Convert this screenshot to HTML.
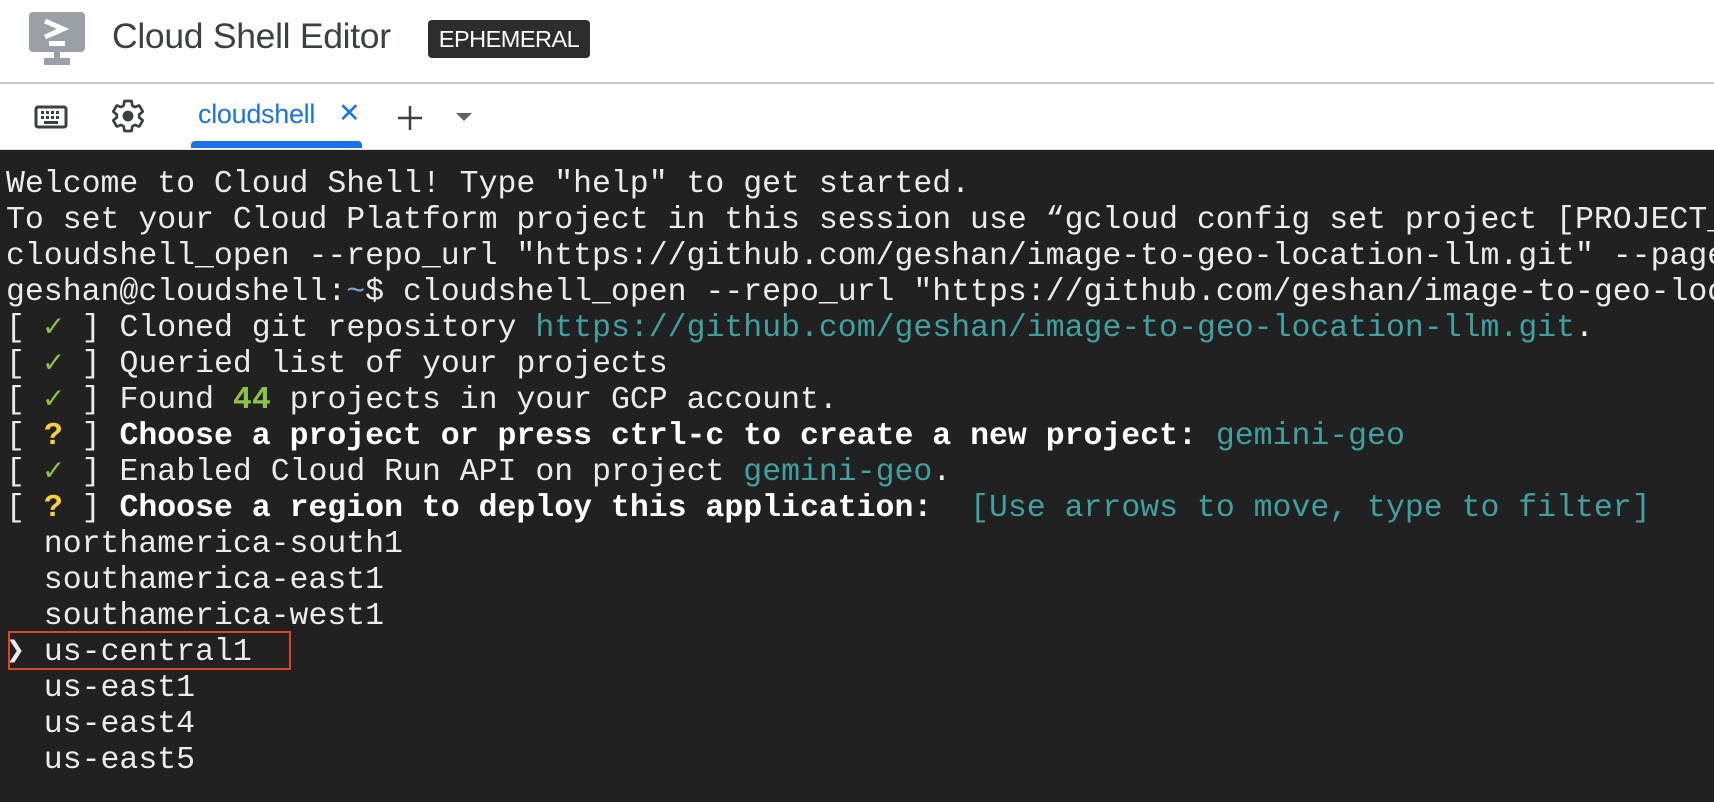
<!DOCTYPE html>
<html><head><meta charset="utf-8"><style>
*{margin:0;padding:0;box-sizing:border-box}
html,body{width:1714px;height:802px;overflow:hidden;background:#fff;font-family:"Liberation Sans",sans-serif}
#hdr{position:absolute;left:0;top:0;width:1714px;height:83px;background:#fff}
#sep{position:absolute;left:0;top:82px;width:1714px;height:2px;background:#c8c8c8}
#title{position:absolute;left:112px;top:16px;font-size:35.5px;color:#3c4043;letter-spacing:-0.3px}
#badge{position:absolute;left:428px;top:20px;width:162px;height:38px;background:#2d2d2d;color:#fff;border-radius:4px;font-size:23.5px;line-height:38px;text-align:center;letter-spacing:-0.5px}
#tabs{position:absolute;left:0;top:84px;width:1714px;height:66px;background:#fff;border-bottom:1px solid #e0e0e0}
#tab{position:absolute;left:198px;top:15px;font-size:27px;color:#1a73e8;letter-spacing:-0.3px}
#tabx{position:absolute;left:338px;top:14px;font-size:27px;color:#1a73e8}
#ul{position:absolute;left:191px;top:57px;width:171px;height:7px;background:#1a73e8;border-radius:4px 4px 0 0}
#term{position:absolute;left:0;top:150px;width:1714px;height:652px;background:#212121;overflow:hidden}
.l{position:absolute;left:6px;white-space:pre;font-family:"Liberation Mono",monospace;font-size:31.5px;line-height:36px;color:#ececec}
.t{color:#41a0a0}.g{color:#8bc34a}.y{color:#f5d142}.b{font-weight:bold;color:#fff}.bl{color:#7aa7d8}
#box{position:absolute;left:8px;top:631px;width:283px;height:39px;border:2px solid #d9462c}
</style></head><body>
<div id="hdr">
<svg style="position:absolute;left:26px;top:12px" width="62" height="56" viewBox="0 0 60 56"><rect x="2" y="0" width="56" height="40" rx="4" fill="#9aa0a6"/><path d="M18 9 L36 17 L18 25" stroke="#fff" stroke-width="5" fill="none"/><rect x="22" y="29" width="16" height="5" fill="#fff"/><rect x="27" y="40" width="6" height="6" fill="#9aa0a6"/><rect x="17" y="46" width="26" height="7" fill="#9aa0a6"/></svg>
<div id="title">Cloud Shell Editor</div>
<div id="badge">EPHEMERAL</div>
</div>
<div id="sep"></div>
<div id="tabs">
<svg style="position:absolute;left:34px;top:21px" width="34" height="24" viewBox="0 0 34 24"><rect x="2" y="2" width="30" height="20" rx="2" fill="none" stroke="#3c4043" stroke-width="3"/><g fill="#3c4043"><rect x="7" y="6" width="3" height="3"/><rect x="12" y="6" width="3" height="3"/><rect x="17" y="6" width="3" height="3"/><rect x="22" y="6" width="3" height="3"/><rect x="7" y="11" width="3" height="3"/><rect x="12" y="11" width="3" height="3"/><rect x="17" y="11" width="3" height="3"/><rect x="22" y="11" width="3" height="3"/><rect x="10" y="16" width="14" height="3"/></g></svg>
<svg style="position:absolute;left:110px;top:14px" width="36" height="36" viewBox="0 0 24 24"><path fill="none" stroke="#3c4043" stroke-width="1.8" stroke-linejoin="round" d="M19.43 12.98c.04-.32.07-.64.07-.98s-.03-.66-.07-.98l2.11-1.65c.19-.15.24-.42.12-.64l-2-3.46c-.12-.22-.39-.3-.61-.22l-2.49 1c-.52-.4-1.08-.73-1.690-.98l-.38-2.65C14.46 2.18 14.25 2 14 2h-4c-.25 0-.46.18-.49.42l-.38 2.65c-.61.25-1.17.59-1.69.98l-2.49-1c-.23-.09-.49 0-.61.22l-2 3.46c-.13.22-.07.49.12.64l2.11 1.65c-.04.32-.07.65-.07.98s.03.66.07.98l-2.11 1.65c-.19.15-.24.42-.12.64l2 3.46c.12.22.39.3.61.22l2.49-1c.52.4 1.08.73 1.69.98l.38 2.65c.03.24.24.42.49.42h4c.25 0 .46-.18.49-.42l.38-2.65c.61-.25 1.17-.59 1.69-.98l2.49 1c.23.09.49 0 .61-.22l2-3.46c.12-.22.07-.49-.12-.64l-2.11-1.65z"/><circle cx="12" cy="12" r="3.6" fill="#3c4043"/></svg>
<div id="tab">cloudshell</div><div id="tabx">✕</div>
<div id="ul"></div>
<svg style="position:absolute;left:397px;top:21px" width="26" height="26"><path d="M13 1V25M1 13H25" stroke="#3c4043" stroke-width="2.5"/></svg>
<svg style="position:absolute;left:456px;top:29px" width="16" height="9"><path d="M0 0H16L8 8Z" fill="#5f6368"/></svg>
</div>
<div id="term">
<div class="l" style="top:17px">Welcome to Cloud Shell! Type "help" to get started.</div>
<div class="l" style="top:53px">To set your Cloud Platform project in this session use “gcloud config set project [PROJECT_ID]”</div>
<div class="l" style="top:89px">cloudshell_open --repo_url "https://github.com/geshan/image-to-geo-location-llm.git" --page</div>
<div class="l" style="top:125px">geshan@cloudshell:<span class="bl">~</span>$ cloudshell_open --repo_url "https://github.com/geshan/image-to-geo-location</div>
<div class="l" style="top:161px">[ <span class="g">✓</span> ] Cloned git repository <span class="t">https://github.com/geshan/image-to-geo-location-llm.git</span>.</div>
<div class="l" style="top:197px">[ <span class="g">✓</span> ] Queried list of your projects</div>
<div class="l" style="top:233px">[ <span class="g">✓</span> ] Found <b class="g">44</b> projects in your GCP account.</div>
<div class="l" style="top:269px">[ <b class="y">?</b> ] <span class="b">Choose a project or press ctrl-c to create a new project:</span> <span class="t">gemini-geo</span></div>
<div class="l" style="top:305px">[ <span class="g">✓</span> ] Enabled Cloud Run API on project <span class="t">gemini-geo</span>.</div>
<div class="l" style="top:341px">[ <b class="y">?</b> ] <span class="b">Choose a region to deploy this application:</span>  <span class="t">[Use arrows to move, type to filter]</span></div>
<div class="l" style="top:377px">  northamerica-south1</div>
<div class="l" style="top:413px">  southamerica-east1</div>
<div class="l" style="top:449px">  southamerica-west1</div>
<div class="l" style="top:485px"><b>❯</b> us-central1</div>
<div class="l" style="top:521px">  us-east1</div>
<div class="l" style="top:557px">  us-east4</div>
<div class="l" style="top:593px">  us-east5</div>
</div>
<div id="box"></div>
</body></html>
